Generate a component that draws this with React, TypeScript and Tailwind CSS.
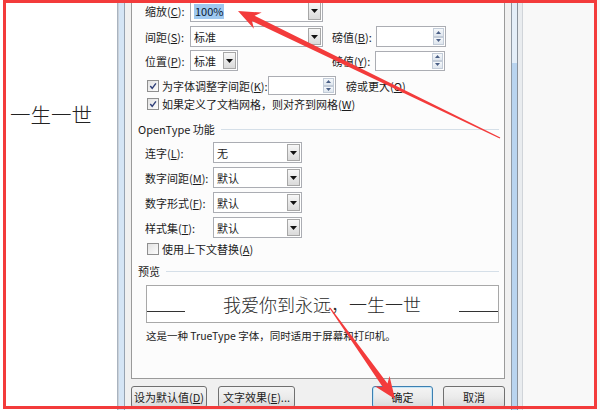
import type { ReactNode } from 'react';

function DropBtn() {
  return (
    <div className="my-[1px] mr-[1px] flex w-[13px] items-center justify-center border border-[#a7a7a7] bg-linear-to-b from-[#f7f7f7] to-[#dadada]">
      <svg width="7" height="4" viewBox="0 0 7 4">
        <path d="M0 0h7L3.5 4z" fill="#111" />
      </svg>
    </div>
  );
}

function Combo({ className, children }: { className: string; children: ReactNode }) {
  return (
    <div className={`flex border border-[#abadb3] bg-white ${className}`}>
      <div className="flex flex-1 items-center pl-[3px]">{children}</div>
      <DropBtn />
    </div>
  );
}

function SpinHalf({ up }: { up?: boolean }) {
  return (
    <div className="flex flex-1 items-center justify-center border border-[#c3ccd8] bg-linear-to-b from-[#f5f8fb] to-[#dfe6ee]">
      <svg width="5" height="3" viewBox="0 0 5 3">
        <path d={up ? 'M0 3h5L2.5 0z' : 'M0 0h5L2.5 3z'} fill="#4a5f86" />
      </svg>
    </div>
  );
}

function Spin({ className }: { className: string }) {
  return (
    <div className={`flex justify-end border border-[#abadb3] bg-white ${className}`}>
      <div className="my-[1px] mr-[1px] flex w-[11px] flex-col">
        <SpinHalf up />
        <SpinHalf />
      </div>
    </div>
  );
}

function Check({ on }: { on?: boolean }) {
  return (
    <div className="flex h-[12px] w-[12px] items-center justify-center border border-[#8f8f8f] bg-linear-to-br from-[#e2e2e2] to-[#fdfdfd]">
      {on && (
        <svg width="8" height="8" viewBox="0 0 9 9">
          <path d="M1.4 4.6l2.2 2.5L7.8 1.6" stroke="#2f3f78" strokeWidth="1.6" fill="none" />
        </svg>
      )}
    </div>
  );
}

function GroupHeader({ title, className }: { title: string; className: string }) {
  return (
    <div className={`-ml-[7px] flex h-[14px] items-center ${className}`}>
      <span>{title}</span>
      <div className="ml-[6px] h-[1px] flex-1 bg-[#d5dfe8]" />
    </div>
  );
}

function Btn({ className, children }: { className: string; children: ReactNode }) {
  return (
    <div
      className={`flex h-[22px] items-center justify-center rounded-[3px] border bg-linear-to-b from-[#f4f4f4] via-[#ebebeb] to-[#d9d9d9] ${className}`}
    >
      {children}
    </div>
  );
}

export default function App() {
  return (
    <div className="relative flex h-[410px] w-[600px] overflow-hidden bg-white font-['Noto_Sans_CJK_SC',sans-serif] text-[11px] leading-[14px] text-[#1b1b1b]">
      {/* document behind the dialog */}
      <div className="w-[117px] bg-white pl-[10px] pt-[103px]">
        <span className="text-[20.5px] font-light leading-[22px] text-[#222]">一生一世</span>
      </div>

      {/* dialog left frame */}
      <div className="flex w-[8px]">
        <div className="w-[1px] bg-[#a9b3bf]" />
        <div className="w-[1px] bg-[#c9d1da]" />
        <div className="w-[5px] bg-[#d5e5f5]" />
        <div className="w-[1px] bg-[#97a3b1]" />
      </div>

      {/* dialog body */}
      <div className="flex w-[386px] flex-col bg-[#f0f0f0]">
        <div className="ml-[6px] flex h-[379px] w-[374px] flex-col border-x border-b border-[#9a9a9a] bg-[#fcfcfc] pl-[13px] pr-[5px]">
          <div className="flex h-[22px] items-center">
            <span className="w-[45px]">缩放(<u>C</u>):</span>
            <Combo className="h-[22px] w-[133px]">
              <span className="bg-[#9fc9f0] px-[1px] leading-[15px] text-[#0b1a33]">100%</span>
            </Combo>
          </div>

          <div className="mt-[4px] flex h-[21px] items-center">
            <span className="w-[45px]">间距(<u>S</u>):</span>
            <Combo className="h-[21px] w-[133px]">标准</Combo>
            <span className="ml-[9px] w-[44px]">磅值(<u>B</u>):</span>
            <Spin className="h-[21px] w-[70px]" />
          </div>

          <div className="mt-[3px] flex h-[21px] items-center">
            <span className="w-[45px]">位置(<u>P</u>):</span>
            <Combo className="h-[21px] w-[48px]">标准</Combo>
            <span className="ml-[94px] w-[43px]">磅值(<u>Y</u>):</span>
            <Spin className="h-[20px] w-[70px]" />
          </div>

          <div className="mt-[5px] flex h-[19px] items-center">
            <div className="ml-[2px]">
              <Check on />
            </div>
            <span className="ml-[3px] w-[106px]">为字体调整字间距(<u>K</u>):</span>
            <Spin className="h-[19px] w-[68px]" />
            <span className="ml-[10px]">磅或更大(<u>O</u>)</span>
          </div>

          <div className="mt-[2px] flex h-[14px] items-center">
            <div className="ml-[2px]">
              <Check on />
            </div>
            <span className="ml-[3px]">如果定义了文档网格，则对齐到网格(<u>W</u>)</span>
          </div>

          <GroupHeader title="OpenType 功能" className="mt-[11px]" />

          <div className="mt-[6px] flex h-[21px] items-center">
            <span className="w-[68px]">连字(<u>L</u>):</span>
            <Combo className="h-[21px] w-[89px]">无</Combo>
          </div>
          <div className="mt-[4px] flex h-[21px] items-center">
            <span className="w-[68px]">数字间距(<u>M</u>):</span>
            <Combo className="h-[21px] w-[89px]">默认</Combo>
          </div>
          <div className="mt-[4px] flex h-[21px] items-center">
            <span className="w-[68px]">数字形式(<u>F</u>):</span>
            <Combo className="h-[21px] w-[89px]">默认</Combo>
          </div>
          <div className="mt-[4px] flex h-[21px] items-center">
            <span className="w-[68px]">样式集(<u>T</u>):</span>
            <Combo className="h-[21px] w-[89px]">默认</Combo>
          </div>

          <div className="mt-[4px] flex h-[14px] items-center">
            <div className="ml-[2px]">
              <Check />
            </div>
            <span className="ml-[3px]">使用上下文替换(<u>A</u>)</span>
          </div>

          <GroupHeader title="预览" className="mt-[8px]" />

          <div className="ml-[1px] mt-[7px] flex h-[38px] w-[353px] border border-[#a8a8a8] bg-white">
            <div className="mt-[25px] h-[1px] w-[38px] bg-[#333]" />
            <div className="flex flex-1 items-center justify-center text-[18px] font-light leading-[22px] text-[#2a2a2a]">
              我爱你到永远，一生一世
            </div>
            <div className="mt-[25px] h-[1px] w-[39px] bg-[#333]" />
          </div>

          <div className="ml-[1px] mt-[6px] h-[14px] text-[10.5px]">
            这是一种 TrueType 字体，同时适用于屏幕和打印机。
          </div>
        </div>

        <div className="ml-[6px] mt-[7px] flex">
          <Btn className="w-[76px] border-[#707070]">设为默认值(<u>D</u>)</Btn>
          <Btn className="ml-[11px] w-[77px] border-[#707070]">文字效果(<u>E</u>)...</Btn>
          <Btn className="ml-[77px] w-[61px] border-[#3c7fb1] shadow-[inset_0_0_0_1px_#c4e5f6]">确定</Btn>
          <Btn className="ml-[10px] w-[62px] border-[#707070]">取消</Btn>
        </div>
      </div>

      {/* dialog right frame */}
      <div className="flex w-[12px]">
        <div className="w-[1px] bg-[#8f99a4]" />
        <div className="flex w-[5px] flex-col">
          <div className="h-[63px] bg-[#e4eef8]" />
          <div className="flex-1 bg-[#b9d4ef]" />
        </div>
        <div className="w-[1px] bg-[#89919b]" />
        <div className="w-[4px] bg-[#e9ecef]" />
        <div className="w-[1px] bg-[#d0d4d9]" />
      </div>

      <div className="flex-1 bg-[#f8f8f8]" />

      {/* red annotation overlay */}
      <div className="pointer-events-none absolute left-[3px] top-0 h-[409px] w-[594px] border-[3px] border-[#f33b3b]" />
      <svg className="pointer-events-none absolute left-0 top-0" width="600" height="410" viewBox="0 0 600 410">
        <polygon
          points="238,11 261.7,12.5 254.6,15.7 500.3,137.5 499.7,138.5 252,21.1 253.9,28.7"
          fill="#f33b3b"
        />
        <polygon
          points="395,399 374.9,386.3 382.7,386.9 329.5,308.3 330.5,307.7 387.5,383.5 389.5,375.9"
          fill="#f33b3b"
        />
      </svg>
    </div>
  );
}
